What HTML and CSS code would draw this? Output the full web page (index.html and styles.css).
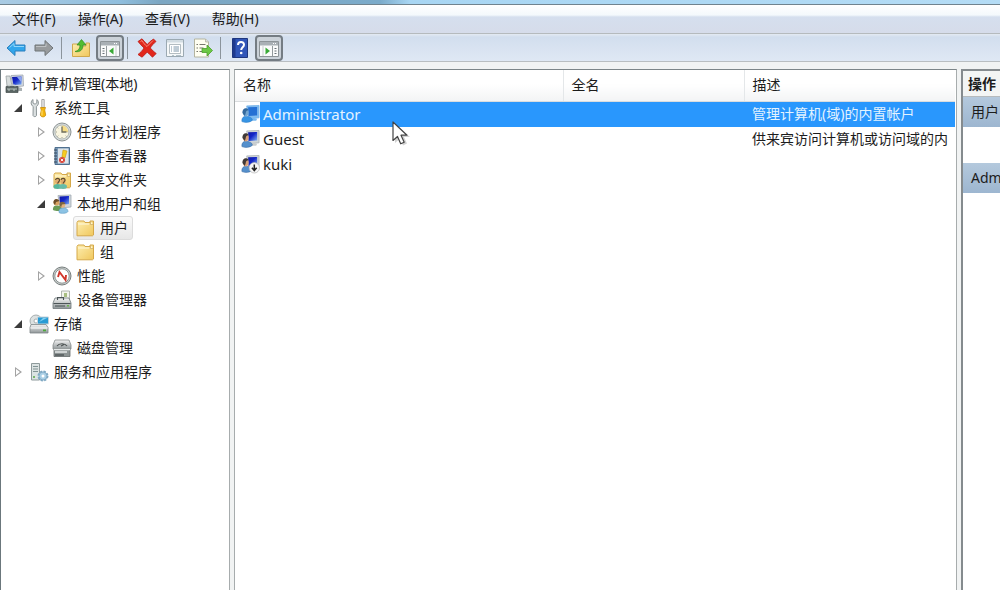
FILE: index.html
```html
<!DOCTYPE html>
<html lang="zh-CN">
<head>
    <meta charset="UTF-8">
    <meta name="viewport" content="width=device-width, initial-scale=1.0">
    <title>计算机管理</title>
    <link rel="stylesheet" href="styles.css">
</head>
<body>
    <svg class="defs" aria-hidden="true">
        <defs>
            <linearGradient id="blue" x1="0" y1="0" x2="1" y2="1">
                <stop offset="0" stop-color="#1018a0"/>
                <stop offset=".45" stop-color="#1426c8"/>
                <stop offset="1" stop-color="#7fb2f2"/>
            </linearGradient>
            <linearGradient id="gold" x1="0" y1="0" x2="1" y2="1">
                <stop offset="0" stop-color="#fdeeb0"/>
                <stop offset="1" stop-color="#f0c75c"/>
            </linearGradient>
            <linearGradient id="metal" x1="0" y1="0" x2="0" y2="1">
                <stop offset="0" stop-color="#f4f4f4"/>
                <stop offset="1" stop-color="#8f9698"/>
            </linearGradient>
            <symbol id="i-folder" viewBox="0 0 20 20">
                <path d="M2 4.500 3 3h6l1 1.500h5V3h3.500v14l-1 .8H2z" fill="url(#gold)" stroke="#d5a849"/>
                <path d="M15.500 3v3.500h2.500" fill="#fff6d0" stroke="#c9a760" stroke-width=".7"/>
                <path d="M3 6h11" stroke="#fff8dc"/>
            </symbol>
            <symbol id="i-user" viewBox="0 0 20 20">
                <path d="M6 1.500 19 1v13L8 15z" fill="#cfd5d8" stroke="#a9b0b4" stroke-width=".8"/>
                <path d="M7.500 3 17 2.500v9L8 12z" fill="url(#blue)"/>
                <path d="M12 14l5 1-1 2h-6z" fill="#c8cccd"/>
                <path d="M1 18c-.5-4 2-6 5-5.500 3 .2 6 1.500 6 4-2 2.500-8 3-11 1.500z" fill="#5590cc" stroke="#386ba5" stroke-width=".6"/>
                <ellipse cx="5" cy="8.500" rx="3" ry="4" fill="#d9a078"/>
                <path d="M1.500 9C1 3.500 6.500 2.500 8 6c-2 .2-3 1-3 3L4 12z" fill="#403a38"/>
            </symbol>
            <symbol id="i-user-sel" viewBox="0 0 20 20">
                <path d="M6 1.500 19 1v13L8 15z" fill="#80bcf0" stroke="#6eaee8" stroke-width=".8"/>
                <path d="M7.500 3 17 2.500v9L8 12z" fill="#2470d4"/>
                <path d="M12 14l5 1-1 2h-6z" fill="#78b8f0"/>
                <path d="M1 18c-.5-4 2-6 5-5.500 3 .2 6 1.500 6 4-2 2.500-8 3-11 1.500z" fill="#3794e4" stroke="#2d7cc8" stroke-width=".6"/>
                <ellipse cx="5" cy="8.500" rx="3" ry="4" fill="#74a6d0"/>
                <path d="M1.500 9C1 3.500 6.500 2.500 8 6c-2 .2-3 1-3 3L4 12z" fill="#346a9e"/>
            </symbol>
            <symbol id="i-computer" viewBox="0 0 20 20">
                <path d="M1 2h4l2 10H2z" fill="#d8dddd" stroke="#99a1a2" stroke-width=".8"/>
                <path d="M6 1.500 18 1l.5 11L8 13z" fill="#d3d9df" stroke="#9ea6b0" stroke-width=".8"/>
                <path d="M7 3 16.500 2.500v8L8.500 11z" fill="url(#blue)"/>
                <path d="M12 3l4.500-.5v6z" fill="#8fa7ee"/>
                <path d="M13 13l4 1v3h-5z" fill="#aab1b3"/>
                <path d="M1 12.500h12v6H1z" fill="#596563" stroke="#424c4b" stroke-width=".7"/>
                <path d="M4 12.500v-1.500h6v1.500M2 15h10M4 15v2M9 15v2" fill="none" stroke="#c6d0cd" stroke-width=".9"/>
            </symbol>
            <symbol id="i-tools" viewBox="0 0 20 20">
                <path d="M4 1.500C1.500 3 1.500 7 4.200 8.500L4 17.500c.5 1.500 3 1.500 3.500 0L7.400 8.500C10 7 10 3 7.800 1.500V5L6 6.200 4 5z" fill="#dadfe0" stroke="#858d90" stroke-width=".9"/>
                <path d="M12.800 1.500h2.400v8h-2.400z" fill="#ececec" stroke="#888" stroke-width=".7"/>
                <path d="M11.500 9.500h5l-.8 2.500 1 5c-.6 2.500-4.800 2.500-5.400 0l1-5z" fill="#f5b60c" stroke="#c98d0c" stroke-width=".8"/>
                <path d="M13 12.500v5" stroke="#ffe27a"/>
            </symbol>
            <symbol id="i-clock" viewBox="0 0 20 20">
                <circle cx="10" cy="10" r="9" fill="#d8dddc" stroke="#8b9292"/>
                <circle cx="10" cy="10" r="7" fill="#f9f5e0" stroke="#a5abaa" stroke-width=".8"/>
                <path d="M10 10V3.500a6.500 6.500 0 0 1 6 6.500z" fill="#f6dc86"/>
                <path d="M10 4.500V10h4.500" fill="none" stroke="#6d6c5c" stroke-width="1.300"/>
                <path d="M4 10h1M10 15v1M15.500 10h.7M5.500 5.500l.8.8M5.500 14.500l.8-.8M14.500 14.500l-.8-.8" stroke="#8f9184" stroke-width=".8"/>
            </symbol>
            <symbol id="i-event" viewBox="0 0 20 20">
                <path d="M3 1.500h14.500v17H3z" fill="#7898b6" stroke="#50708f"/>
                <path d="M6 2.500h10.500v15H6z" fill="#dce4ea"/>
                <path d="M2 4h3M2 7h3M2 10h3M2 13h3M2 16h3" stroke="#36495c"/>
                <path d="M11 4l4 1-2 7-3-1z" fill="#f6cb21" stroke="#c79b10" stroke-width=".6"/>
                <circle cx="10" cy="14" r="3" fill="#da4639"/>
                <path d="m8.800 12.800 2.400 2.400m0-2.400-2.400 2.400" stroke="#fff" stroke-width=".9"/>
            </symbol>
            <symbol id="i-shared" viewBox="0 0 20 20">
                <use href="#i-folder"/>
                <ellipse cx="5.500" cy="16.500" rx="4" ry="2.500" fill="#56b59c"/>
                <ellipse cx="11" cy="16.500" rx="4" ry="2.500" fill="#68bba8"/>
                <circle cx="5.500" cy="11.500" r="2.600" fill="#e0ab6c"/>
                <circle cx="11" cy="11.500" r="2.600" fill="#e0ab6c"/>
                <path d="M3.500 10c.5-2.500 4.500-2 4 .5l-2 3M9 10c.5-2.500 4.500-2 4 .5l-2 3" fill="none" stroke="#5d4a2f" stroke-width="1.200"/>
            </symbol>
            <symbol id="i-group" viewBox="0 0 20 20">
                <path d="M6 1.500 19 1v12L8 14z" fill="#d0d6db" stroke="#a2abb2" stroke-width=".8"/>
                <path d="M7.500 2.500 17 2v8L8 11z" fill="url(#blue)"/>
                <path d="M1 16c-.5-4 2-5 5-4.500s4 2 4 4-6 2-9 .5z" fill="#6a9b57"/>
                <circle cx="4.500" cy="8.500" r="3" fill="#d9a363"/>
                <path d="M1.500 9C1 4 6 4 7.500 7L4 8l-1 3z" fill="#6a4d2b"/>
                <path d="M7 18.500c-.5-3 1-4.500 4-4.500s5 1 5 3.500c-1 2-7 2.500-9 1z" fill="#8cc3e4" stroke="#5e9cc4" stroke-width=".6"/>
                <circle cx="10.500" cy="11" r="2.800" fill="#e2b37e"/>
                <path d="M7.500 11c-.5-4 4.500-4.500 6-1l-3.500.5-1 3z" fill="#7b6540"/>
            </symbol>
            <symbol id="i-perf" viewBox="0 0 20 20">
                <circle cx="10" cy="10" r="9" fill="#c9cecd" stroke="#777e7d"/>
                <circle cx="10" cy="10" r="7.200" fill="#fff" stroke="#8e9594"/>
                <path d="M6 11 7.500 6l6 8 .5-5" fill="none" stroke="#d1362b" stroke-width="1.900"/>
            </symbol>
            <symbol id="i-device" viewBox="0 0 20 20">
                <path d="M9.500 1h8v9h-8z" fill="#f3f5ed" stroke="#a0a69f" stroke-width=".8"/>
                <path d="M12 3h3v4h-3z" fill="#a9bf82"/>
                <path d="M3 8h14l2 5v5.500H1V13z" fill="url(#metal)" stroke="#70797b" stroke-width=".8"/>
                <path d="M5.500 10V7.500h6V10M1.500 13.500h17" fill="none" stroke="#4c5557" stroke-width="1.100"/>
                <path d="M3 16h10" stroke="#475153"/>
                <path d="M15 15h2v1.500h-2z" fill="#69b649"/>
            </symbol>
            <symbol id="i-storage" viewBox="0 0 20 20">
                <circle cx="7" cy="7" r="6" fill="#dce1e1" stroke="#969e9f" stroke-width=".8"/>
                <circle cx="7" cy="7" r="2" fill="#fff" stroke="#969e9f" stroke-width=".8"/>
                <path d="M8.500 3h11v7h-11z" fill="#299bd4" stroke="#c5d3da"/>
                <path d="m10 8 4-4h4z" fill="#82d1f2"/>
                <path d="M2 10.500h15l2 3V19H1v-5.500z" fill="url(#metal)" stroke="#7e8788" stroke-width=".8"/>
                <path d="M1.500 14h17" stroke="#fff"/>
                <path d="M14 15.500h3v1.800h-3z" fill="#4da93b"/>
            </symbol>
            <symbol id="i-disk" viewBox="0 0 20 20">
                <path d="M3 2h14l2 5v4H1V7z" fill="url(#metal)" stroke="#868c8c" stroke-width=".8"/>
                <path d="M5 8c2-3 8-3 10 0M9 8l3-1.500" fill="none" stroke="#4d5353" stroke-width="1.200"/>
                <path d="M2 11h16v7.500H2z" fill="#8d9494" stroke="#656b6b" stroke-width=".8"/>
                <path d="M2 11.500h16M3 14h12" stroke="#e5e8e8" stroke-width="1.300"/>
                <path d="M3 17h9" stroke="#42484a" stroke-width="1.200"/>
            </symbol>
            <symbol id="i-services" viewBox="0 0 20 20">
                <path d="M2.500 1.500h8V18h-8z" fill="#dce3e3" stroke="#8e9a9b"/>
                <path d="M4 4.500h5M4 7h5M4 9.500h5" stroke="#819394" stroke-width="1.100"/>
                <path d="M4 15h2" stroke="#58aa45" stroke-width="1.500"/>
                <circle cx="14" cy="14" r="4.500" fill="#b9d9eb" stroke="#7fa8c2" stroke-width="2" stroke-dasharray="2.200 1.330"/>
                <circle cx="14" cy="14" r="4" fill="#a9cfe5" stroke="#7ba5c1" stroke-width=".8"/>
                <circle cx="14" cy="14" r="1.500" fill="#fff"/>
            </symbol>
            <symbol id="i-back" viewBox="0 0 20 18">
                <path d="M1 9 9 1.500V6h10v6H9v4.500z" fill="#31a6ec" stroke="#2b7fbd" stroke-linejoin="round"/>
                <path d="M3.500 8.500 8 4.500v3h10" fill="none" stroke="#8fd6fb"/>
            </symbol>
            <symbol id="i-forward" viewBox="0 0 20 18">
                <path d="m19 9-8-7.500V6H1v6h10v4.500z" fill="#989b9d" stroke="#6f7477" stroke-linejoin="round"/>
                <path d="M2 7.500h10v-3" fill="none" stroke="#bfc2c4"/>
            </symbol>
            <symbol id="i-up" viewBox="0 0 20 20">
                <path d="M1.500 6H8l1.500 2H15V5h3.500v13.500h-17z" fill="url(#gold)" stroke="#cfa84d"/>
                <path d="M4 13.500c4-1 5-3.500 5-6.500H6l4.500-5.500L15 7h-3c0 5-3 7.500-8 6.500z" fill="#52bd32" stroke="#328d20" stroke-width=".7"/>
            </symbol>
            <symbol id="i-pane-left" viewBox="0 0 20 18">
                <path d="M.5 2.500h19v15H.5z" fill="#fafbfb" stroke="#8d9498"/>
                <path d="M1 3h18v3.500H1z" fill="#a9b0b5"/>
                <path d="M14 4.500h1M16 4.500h1" stroke="#fff"/>
                <path d="M6.500 7v10" stroke="#939a9d"/>
                <path d="M2.500 9.500h2M2.500 12h2M2.500 14.500h2" stroke="#687177"/>
                <path d="m9 12 4.500-3.500v7z" fill="#39a936"/>
                <path d="M16 7v10" stroke="#c8cdcf"/>
            </symbol>
            <symbol id="i-pane-right" viewBox="0 0 20 18">
                <path d="M.5 2.500h19v15H.5z" fill="#fafbfb" stroke="#8d9498"/>
                <path d="M1 3h18v3.500H1z" fill="#a9b0b5"/>
                <path d="M14 4.500h1M16 4.500h1" stroke="#fff"/>
                <path d="M13.500 7v10" stroke="#939a9d"/>
                <path d="M15.500 9.500h2M15.500 12h2M15.500 14.500h2" stroke="#687177"/>
                <path d="M11 12 6.500 8.500v7z" fill="#39a936"/>
                <path d="M4 7v10" stroke="#c8cdcf"/>
            </symbol>
            <symbol id="i-delete" viewBox="0 0 20 20">
                <path d="M1 3.500 5 .8C7 3 8.500 5 10.300 6.500 12 4.500 14 2.500 16.500 1L19 3.500C16.500 5.500 14.500 7.800 13.300 10c2 2.300 3.700 4 5.900 5.500L15.500 19.200c-2-1.700-3.500-3.500-5.300-5.200C8.500 16 7 17.500 5 19.200l-4-2.700C3.500 14.500 5.500 12.500 7 10 5 8 3 6 1 3.500z" fill="#e2271c" stroke="#b91c16" stroke-width=".8"/>
                <path d="M3.500 3.500l1.500-1c1.500 2.500 3 4.500 5 6l6-6" fill="none" stroke="#f88d7c"/>
            </symbol>
            <symbol id="i-props" viewBox="0 0 20 20">
                <path d="M1.500 1.500h17v17h-17z" fill="#f5f8f9" stroke="#9ba9b2"/>
                <path d="M2 2h16v2.500H2z" fill="#d2dce2"/>
                <path d="M4.500 6.500h11v9h-11z" fill="#fff" stroke="#a2adb3" stroke-width=".8"/>
                <path d="M6 9h1M8.500 9h5.500M6 11h1M8.500 11h5.500M6 13h1M8.500 13h5.500" stroke="#7e97aa"/>
                <path d="M7 17.500h2M11 17.500h5" stroke="#b2c1ca"/>
            </symbol>
            <symbol id="i-export" viewBox="0 0 20 20">
                <path d="M1.500 1h11l3 3v15h-14z" fill="#fffef1" stroke="#b4b4a0"/>
                <path d="M12.500 1v3h3" fill="#ddd" stroke="#b4b4a0" stroke-width=".8"/>
                <path d="M3.500 6.500h1.500M3.500 10h1.500M3.500 13.500h1.500M6.500 6.500h6M6.500 10h4M6.500 13.500h4" stroke="#77776d"/>
                <path d="M9 10.500h5V7l5.500 5.500L14 18v-3.500H9z" fill="#6cc845" stroke="#4c9e2d" stroke-width=".8"/>
            </symbol>
            <symbol id="i-help" viewBox="0 0 20 20">
                <path d="M2.500.5h15v19h-15z" fill="#3156b8" stroke="#1e377f"/>
                <path d="M3 1h2.500v18H3z" fill="#1f3a8e"/>
                <path d="M8 7c0-4 6-4 6-.3 0 2.600-2.800 2.500-2.800 5.300" fill="none" stroke="#fff" stroke-width="2"/>
                <circle cx="11.200" cy="15" r="1.300" fill="#fff"/>
            </symbol>
        </defs>
    </svg>

    <div class="window">
        <div class="titlebar"></div>

        <nav class="menubar">
            <button>文件(F)</button>
            <button>操作(A)</button>
            <button>查看(V)</button>
            <button>帮助(H)</button>
        </nav>

        <div class="toolbar" role="toolbar">
            <button class="tool" aria-label="后退"><svg><use href="#i-back"/></svg></button>
            <button class="tool" aria-label="前进"><svg><use href="#i-forward"/></svg></button>
            <span class="sep"></span>
            <button class="tool" aria-label="向上"><svg><use href="#i-up"/></svg></button>
            <button class="tool pressed" aria-label="控制台树"><svg><use href="#i-pane-left"/></svg></button>
            <span class="sep"></span>
            <button class="tool" aria-label="删除"><svg><use href="#i-delete"/></svg></button>
            <button class="tool" aria-label="属性"><svg><use href="#i-props"/></svg></button>
            <button class="tool" aria-label="导出列表"><svg><use href="#i-export"/></svg></button>
            <span class="sep"></span>
            <button class="tool" aria-label="帮助"><svg><use href="#i-help"/></svg></button>
            <button class="tool pressed" aria-label="操作窗格"><svg><use href="#i-pane-right"/></svg></button>
        </div>

        <main class="panes">
            <ul class="tree">
                <li class="root"><button class="node"><svg><use href="#i-computer"/></svg><span>计算机管理(本地)</span></button></li>
                <li class="level1"><button class="twisty open" aria-label="折叠"></button><button class="node"><svg><use href="#i-tools"/></svg><span>系统工具</span></button></li>
                <li class="level2"><button class="twisty" aria-label="展开"></button><button class="node"><svg><use href="#i-clock"/></svg><span>任务计划程序</span></button></li>
                <li class="level2"><button class="twisty" aria-label="展开"></button><button class="node"><svg><use href="#i-event"/></svg><span>事件查看器</span></button></li>
                <li class="level2"><button class="twisty" aria-label="展开"></button><button class="node"><svg><use href="#i-shared"/></svg><span>共享文件夹</span></button></li>
                <li class="level2"><button class="twisty open" aria-label="折叠"></button><button class="node"><svg><use href="#i-group"/></svg><span>本地用户和组</span></button></li>
                <li class="level3"><button class="node current"><svg><use href="#i-folder"/></svg><span>用户</span></button></li>
                <li class="level3"><button class="node"><svg><use href="#i-folder"/></svg><span>组</span></button></li>
                <li class="level2"><button class="twisty" aria-label="展开"></button><button class="node"><svg><use href="#i-perf"/></svg><span>性能</span></button></li>
                <li class="level2"><span class="twisty-space"></span><button class="node"><svg><use href="#i-device"/></svg><span>设备管理器</span></button></li>
                <li class="level1"><button class="twisty open" aria-label="折叠"></button><button class="node"><svg><use href="#i-storage"/></svg><span>存储</span></button></li>
                <li class="level2"><span class="twisty-space"></span><button class="node"><svg><use href="#i-disk"/></svg><span>磁盘管理</span></button></li>
                <li class="level1"><button class="twisty" aria-label="展开"></button><button class="node"><svg><use href="#i-services"/></svg><span>服务和应用程序</span></button></li>
            </ul>

            <div class="list">
                <table>
                    <thead>
                        <tr>
                            <th class="col-name">名称</th>
                            <th class="col-full">全名</th>
                            <th>描述</th>
                        </tr>
                    </thead>
                    <tbody>
                        <tr class="selected">
                            <td><div class="user"><svg><use href="#i-user-sel"/></svg><span>Administrator</span></div></td>
                            <td></td>
                            <td>管理计算机(域)的内置帐户</td>
                        </tr>
                        <tr>
                            <td><div class="user"><svg><use href="#i-user"/></svg><span>Guest</span></div></td>
                            <td></td>
                            <td>供来宾访问计算机或访问域的内</td>
                        </tr>
                        <tr>
                            <td><div class="user"><svg viewBox="0 0 20 20"><use href="#i-user"/><circle cx="14" cy="14" r="5.500" fill="#f6f6f6" stroke="#b2b2b2" stroke-width=".7"/><path d="M14 10.500v6M11.500 14l2.500 3 2.500-3" fill="none" stroke="#222" stroke-width="1.600"/></svg><span>kuki</span></div></td>
                            <td></td>
                            <td></td>
                        </tr>
                    </tbody>
                </table>
            </div>

            <aside class="actions">
                <h2>操作</h2>
                <h3>用户</h3>
                <div class="actions-more"></div>
                <h3>Administrator</h3>
            </aside>
        </main>

        <svg class="cursor" viewBox="0 0 18 26">
            <path d="M3 3v19l5-4.500 3 7 4-2-3-6.500h6z" fill="#000" opacity=".18"/>
            <path d="M1 1v18.500l4.500-4 3.200 7.300 3.500-1.600-3.200-7H15z" fill="#fff" stroke="#444" stroke-width="1.200" stroke-linejoin="round"/>
        </svg>
    </div>
</body>
</html>
```
FILE: styles.css
```css
* { box-sizing: border-box; }

body {
    margin: 0;
    font-family: "Noto Sans", "Noto Sans CJK SC", sans-serif;
    font-size: 14px;
    line-height: 20px;
    color: #1c1c1c;
    overflow: hidden;
}

button {
    font: inherit;
    color: inherit;
    background: none;
    border: 0;
    padding: 0;
}

.defs { position: absolute; width: 0; height: 0; }

.window {
    position: relative;
    display: flex;
    flex-direction: column;
    height: 100vh;
    background: #f1f3f3;
}

.titlebar {
    height: 5px;
    flex: none;
    background: linear-gradient(90deg, #a9cbe3, #8fbedd 12%, #7ba6c2 16%, #7babca 38%, #a8d6f3 41%, #b4dcf5);
    border-bottom: 1px solid #70838e;
}

/* menu */
.menubar {
    display: flex;
    flex: none;
    gap: 22px;
    height: 29px;
    padding: 0 12px;
    background: linear-gradient(#fff, #f4f9fc 10px, #d5dfee 12px, #d6dcea);
    border-bottom: 1px solid #b5babd;
}

/* toolbar */
.toolbar {
    display: flex;
    flex: none;
    align-items: center;
    height: 28px;
    padding: 0 2px;
    background: linear-gradient(#e4eaf2, #d2deee 3px, #dfe8f4);
    border-bottom: 1px solid #b9bec1;
}
.tool {
    display: flex;
    align-items: center;
    justify-content: center;
    width: 28px;
    height: 26px;
}
.tool svg { width: 20px; height: 20px; }
.tool.pressed {
    margin-left: 1px;
    border: 2px solid #747c83;
    border-radius: 4px;
    background: #cbd2d9;
}
.sep {
    width: 1px;
    height: 22px;
    margin: 0 5px 0 3px;
    background: #8b949c;
}

/* panes */
.panes {
    display: grid;
    grid-template-columns: 230px 1fr 39px;
    gap: 4px;
    flex: 1;
    min-height: 0;
    padding-top: 7px;
}
.tree, .list, .actions {
    min-width: 0;
    overflow: hidden;
    background: #fff;
    border: 1px solid #8b9092;
    border-bottom: 0;
}

/* console tree */
.tree {
    margin: 0;
    padding: 2px 0 0;
    list-style: none;
    border-color: #7c8588 #a7acad;
    border-left-color: #6b777c;
}
.tree li {
    display: flex;
    align-items: center;
    height: 24px;
}
.root { padding-left: 4px; }
.level1 { padding-left: 10px; }
.level2 { padding-left: 33px; }
.level3 { padding-left: 72px; }
.node {
    display: flex;
    align-items: center;
    gap: 5px;
    height: 24px;
    padding: 0 4px 0 2px;
    white-space: nowrap;
}
.root .node { gap: 6px; padding: 0; }
.node svg { width: 20px; height: 20px; flex: none; }
.node.current {
    background: linear-gradient(#fafafa, #e7e7e7);
    border: 1px solid #dcdcdc;
    border-radius: 3px;
    padding: 0 4px 0 1px;
}
.twisty, .twisty-space {
    width: 16px;
    height: 20px;
    flex: none;
}
.twisty::before {
    content: "";
    display: block;
    width: 7px;
    height: 10px;
    margin-left: 4px;
    background: #a3a3a3;
    clip-path: polygon(evenodd, 0 0, 100% 50%, 0 100%, 0 0, 1px 2px, 1px 8px, 5px 5px, 1px 2px);
}
.twisty.open::before {
    width: 8px;
    height: 8px;
    margin-left: 3px;
    background: #3c3c3c;
    clip-path: polygon(100% 0, 100% 100%, 0 100%);
}

/* user list */
.list { padding-right: 1px; border-color: #7c8588 #a7acad; }
.list table {
    width: 100%;
    table-layout: fixed;
    border-collapse: collapse;
}
.list th {
    height: 31px;
    padding: 0 8px;
    font-weight: normal;
    text-align: left;
    background: linear-gradient(#fff 45%, #f3f4f5);
    border-right: 1px solid #e4e7e9;
    border-bottom: 1px solid #dadddf;
}
.list th:last-child { border-right: 0; }
.col-name { width: 328px; }
.col-full { width: 181px; }
.list td {
    height: 25px;
    padding: 0 0 0 8px;
    white-space: nowrap;
    overflow: hidden;
}
.list td:first-child { padding-left: 6px; }
.user {
    display: flex;
    align-items: center;
    font-size: 15px;
}
.user svg { width: 19px; height: 20px; flex: none; }
.user span {
    flex: 1;
    height: 25px;
    padding-left: 3px;
    line-height: 25px;
}
.selected { color: #e4f3ff; }
.selected .user span,
.selected td + td { background: #2997fd; }

/* actions */
.actions {
    border: 2px solid #858b8e;
    border-width: 2px 0 0 2px;
    white-space: nowrap;
}
.actions h2, .actions h3 {
    margin: 0;
    font-size: 14px;
    line-height: 20px;
}
.actions h2 {
    padding: 3px 5px 2px;
    background: #f3f5f4;
    border-bottom: 1px solid #b6bbbd;
}
.actions h3 {
    height: 30px;
    padding: 5px 8px;
    font-weight: normal;
    background: linear-gradient(#b4c9dd, #9db6d0);
}
.actions-more { height: 36px; }

.cursor {
    position: absolute;
    left: 392px;
    top: 121px;
    width: 18px;
    height: 26px;
}
```
